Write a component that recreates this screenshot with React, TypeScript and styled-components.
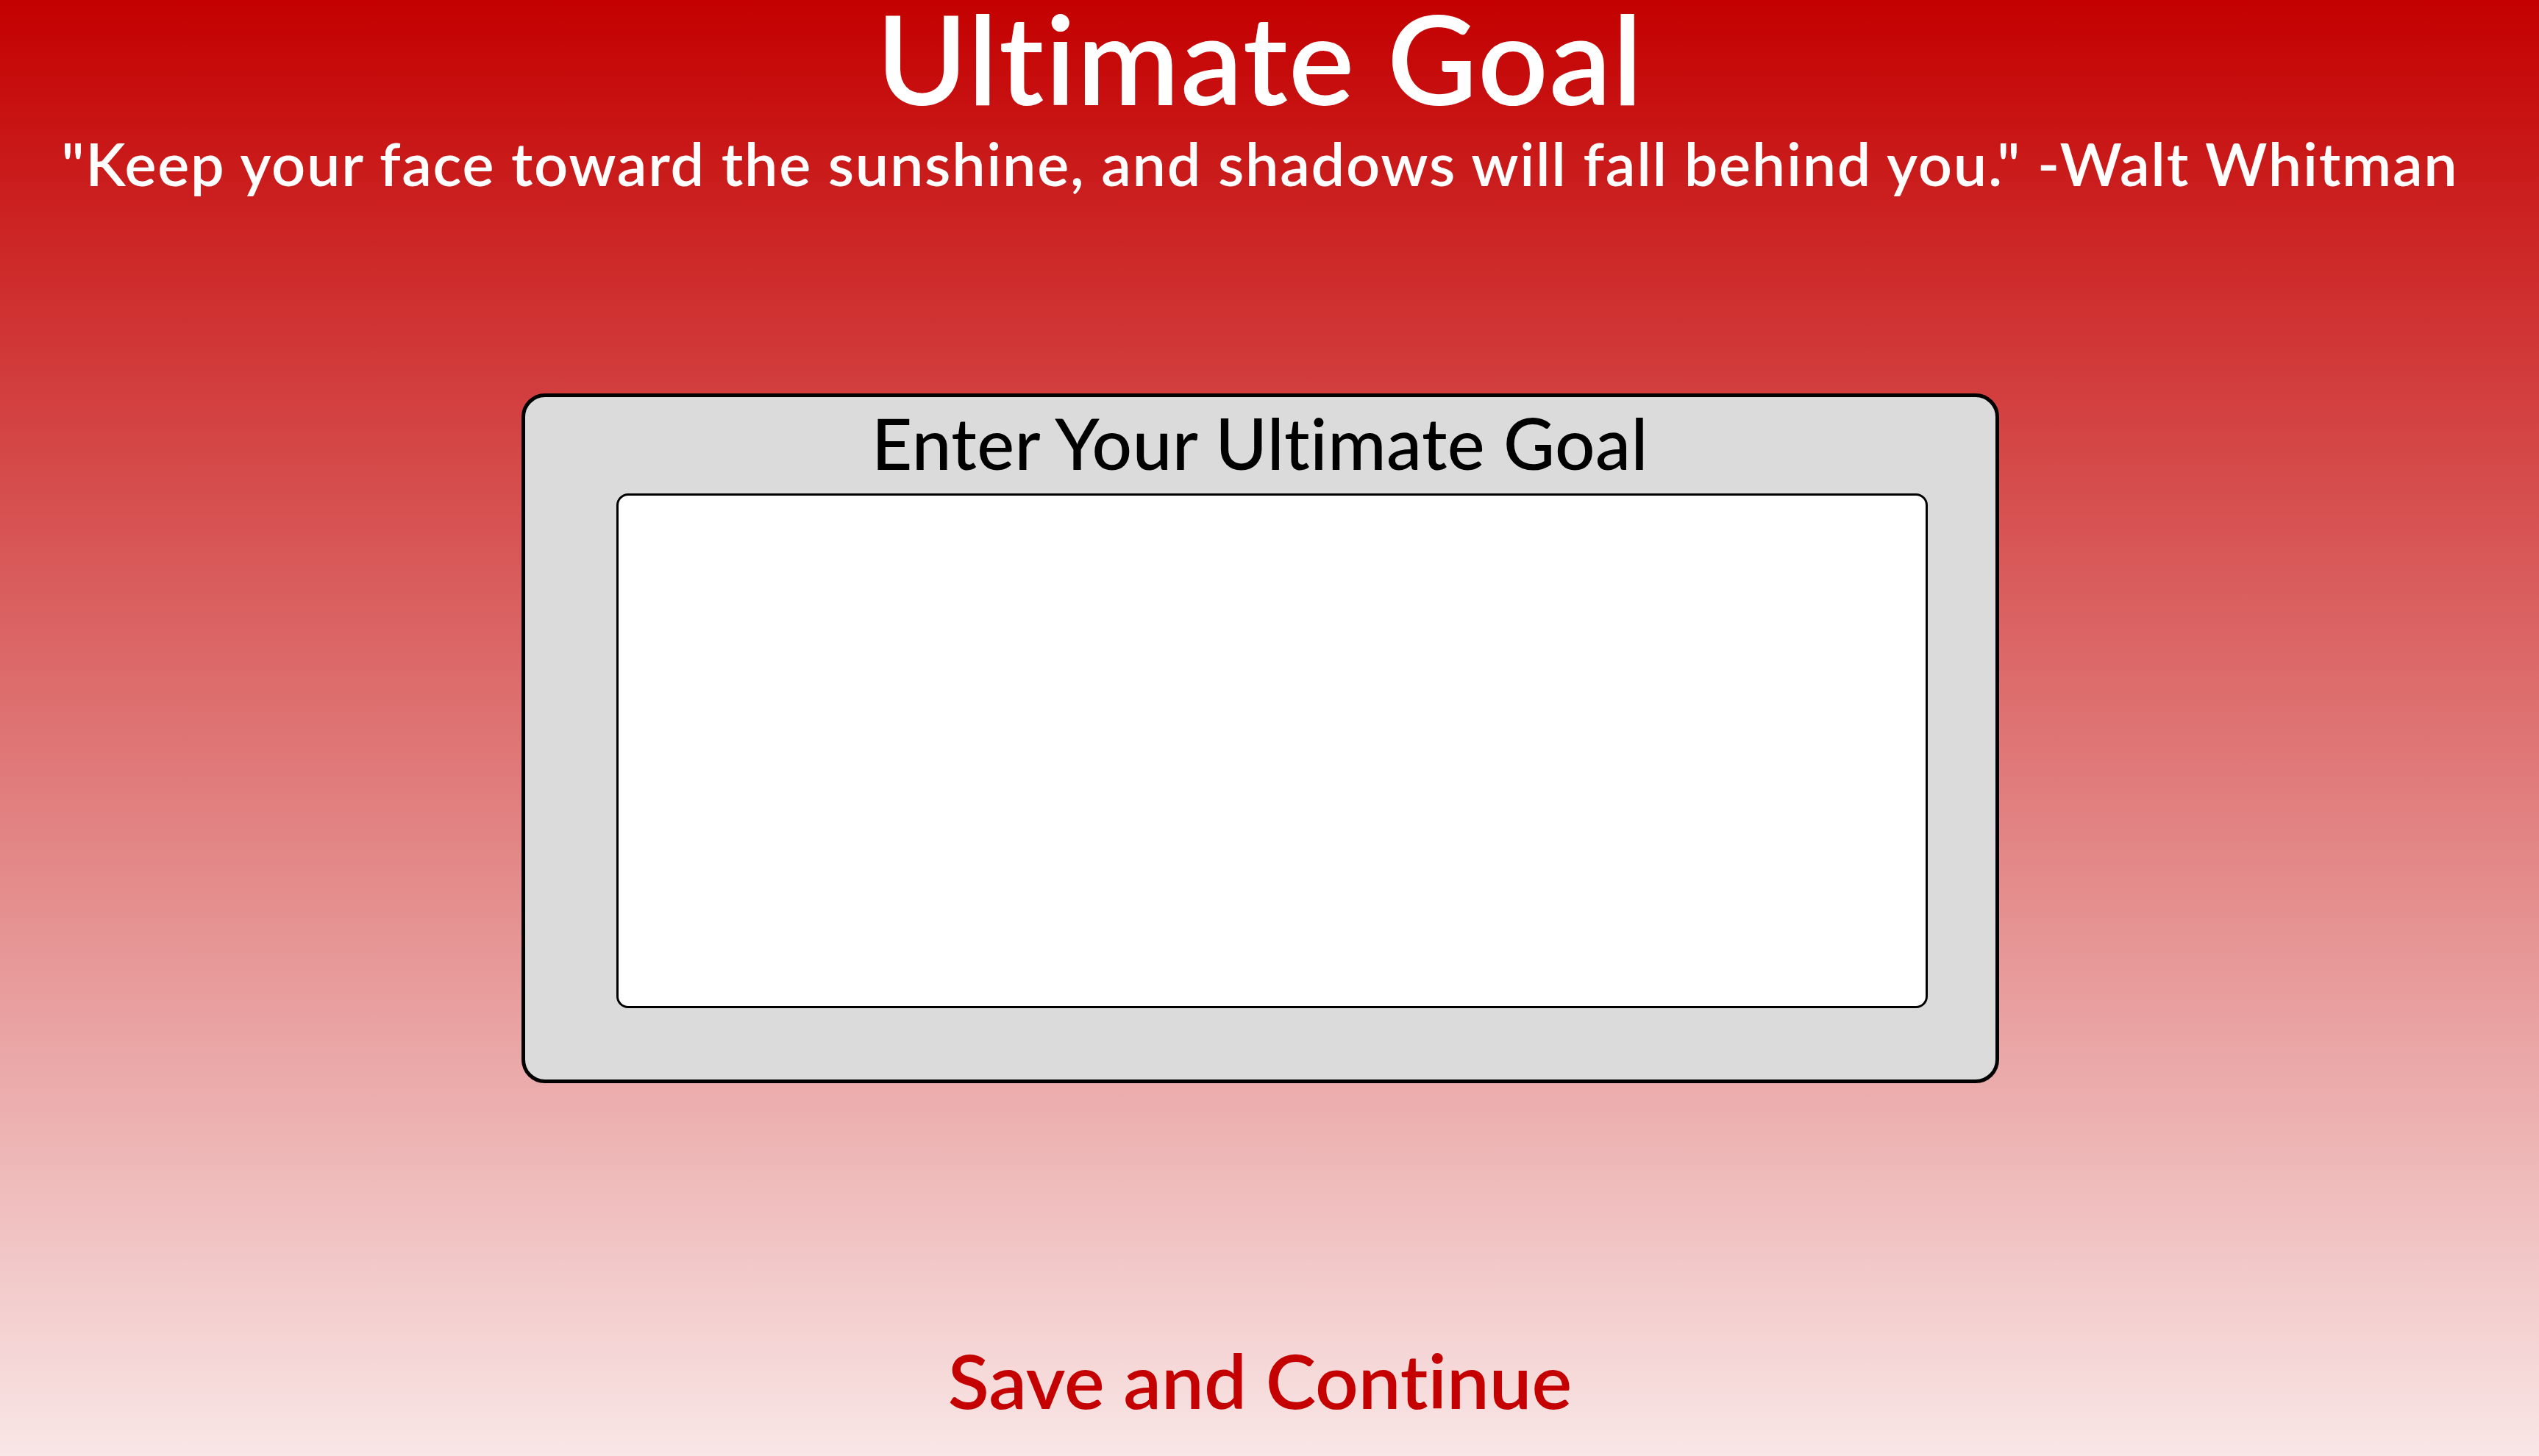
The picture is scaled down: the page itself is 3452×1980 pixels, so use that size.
import React, { useState } from "react";
import styled, { createGlobalStyle } from "styled-components";

const GlobalStyle = createGlobalStyle`
  html, body {
    margin: 0;
    padding: 0;
    min-height: 100%;
  }
  body {
    font-family: Lato, "Open Sans", "Liberation Sans", sans-serif;
    font-variant-ligatures: none;
  }
  * { box-sizing: border-box; }
`;

const Page = styled.main`
  min-height: 100vh;
  display: flex;
  flex-direction: column;
  align-items: center;
  padding: 0 26px 0 0;
  background: linear-gradient(180deg, #c40000 0%, #f9e6e6 100%);
  font-family: Lato, "Open Sans", "Liberation Sans", sans-serif;
  font-variant-ligatures: none;
  overflow: hidden;
`;

const Title = styled.h1`
  margin: 0;
  font-size: 168px;
  line-height: 156px;
  font-weight: 600;
  letter-spacing: 1.5px;
  color: #ffffff;
  white-space: nowrap;
`;

const Quote = styled.p`
  margin: 25px 0 0;
  font-size: 81px;
  line-height: 1;
  font-weight: 600;
  letter-spacing: 1.7px;
  color: #ffffff;
  white-space: nowrap;
`;

const Card = styled.section`
  margin-top: 273px;
  width: 2009px;
  display: flex;
  flex-direction: column;
  align-items: center;
  padding: 14px 0 97px;
  background: #dbdbdb;
  border: 5px solid #000000;
  border-radius: 32px;
`;

const CardTitle = styled.h2`
  margin: 0;
  font-size: 96px;
  line-height: 1;
  font-weight: 500;
  letter-spacing: 0.5px;
  color: #000000;
  white-space: nowrap;
`;

const GoalInput = styled.textarea`
  margin: 21px 0 0 32px;
  width: 1783px;
  height: 700px;
  padding: 20px;
  resize: none;
  background: #ffffff;
  border: 3px solid #000000;
  border-radius: 16px;
  font-family: Lato, "Open Sans", "Liberation Sans", sans-serif;
  font-size: 48px;
  outline: none;
`;

const SaveButton = styled.button`
  margin-top: 352px;
  padding: 0;
  background: none;
  border: none;
  cursor: pointer;
  font-family: Lato, "Open Sans", "Liberation Sans", sans-serif;
  font-variant-ligatures: none;
  font-size: 103px;
  line-height: 1;
  font-weight: 600;
  color: #c40000;
  white-space: nowrap;
`;

export default function App() {
  const [goal, setGoal] = useState("");
  return (
    <>
      <GlobalStyle />
      <Page>
        <Title>Ultimate Goal</Title>
        <Quote>"Keep your face toward the sunshine, and shadows will fall behind you." -Walt Whitman</Quote>
        <Card>
          <CardTitle>Enter Your Ultimate Goal</CardTitle>
          <GoalInput value={goal} onChange={(e) => setGoal(e.target.value)} />
        </Card>
        <SaveButton type="button">Save and Continue</SaveButton>
      </Page>
    </>
  );
}
